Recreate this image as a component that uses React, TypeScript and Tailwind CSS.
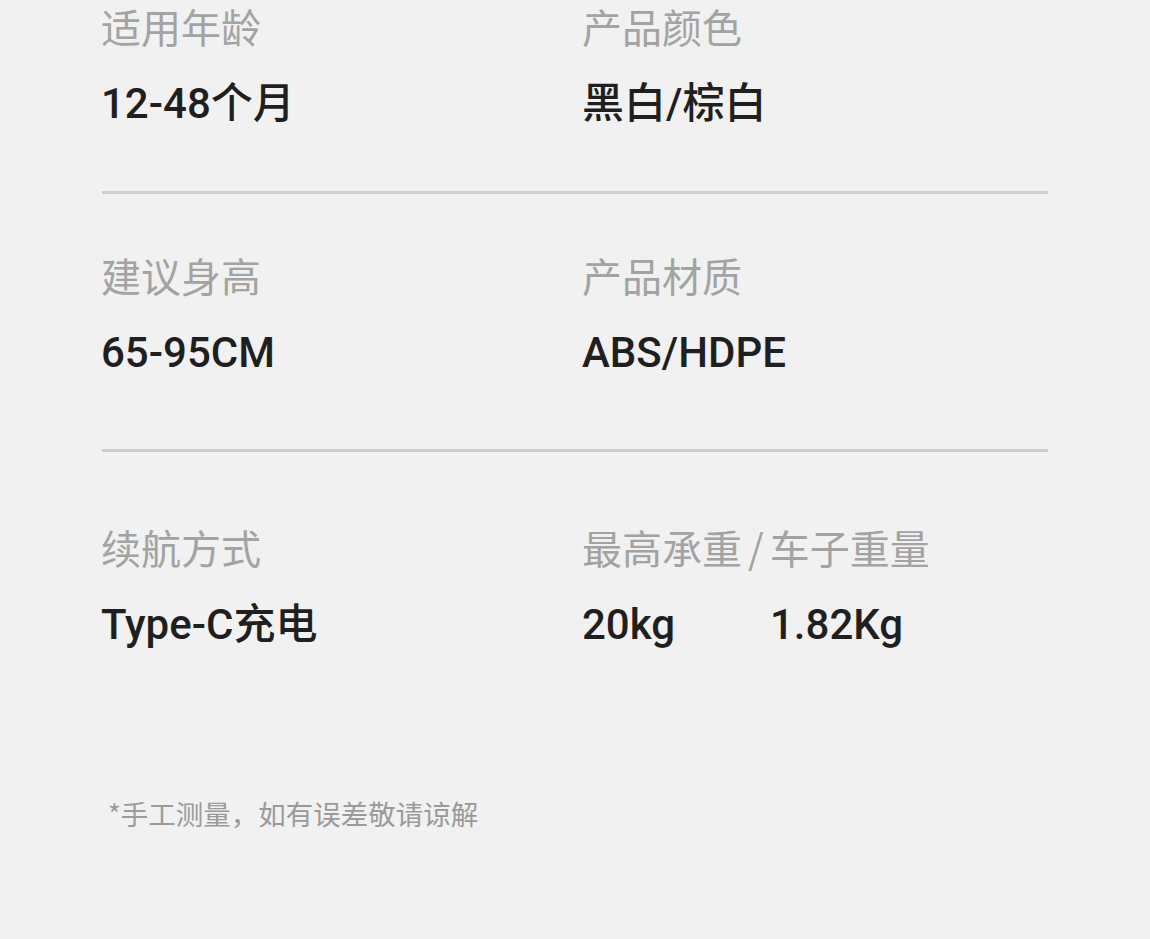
import React from "react";

const LFONT = "font-['Noto_Sans_CJK_SC',sans-serif]";
const VFONT = "font-['Roboto','Noto_Sans_CJK_SC',sans-serif]";

function Label({ children }: { children: React.ReactNode }) {
  return (
    <div className={`${LFONT} text-[40px] leading-[48px] font-normal text-[#a3a3a3] whitespace-nowrap`}>
      {children}
    </div>
  );
}

function Value({ children }: { children: React.ReactNode }) {
  return (
    <div className={`${VFONT} mt-[29px] text-[42px] leading-[50px] font-medium text-[#1f1f1f] whitespace-nowrap`}>
      {children}
    </div>
  );
}

function Divider() {
  return <div className="h-[3px] w-[946px] bg-[#cecece]" />;
}

export default function App() {
  return (
    <div className="min-h-[939px] w-full bg-[#f1f1f1] pl-[101px] pt-[2px]">
      <div className="grid grid-cols-[481px_1fr]">
        <div>
          <Label>适用年龄</Label>
          <Value>12-48个月</Value>
        </div>
        <div>
          <Label>产品颜色</Label>
          <Value>黑白/棕白</Value>
        </div>
      </div>
      <div className="mt-[62px] pl-[1px]">
        <Divider />
      </div>
      <div className="mt-[57px] grid grid-cols-[481px_1fr]">
        <div>
          <Label>建议身高</Label>
          <Value>65-95CM</Value>
        </div>
        <div>
          <Label>产品材质</Label>
          <Value>ABS/HDPE</Value>
        </div>
      </div>
      <div className="mt-[71px] pl-[1px]">
        <Divider />
      </div>
      <div className="mt-[71px] grid grid-cols-[481px_1fr]">
        <div>
          <Label>续航方式</Label>
          <Value>Type-C充电</Value>
        </div>
        <div>
          <Label>
            最高承重<span className="mx-[6px]">/</span>车子重量
          </Label>
          <div className="flex">
            <div className="w-[188px]">
              <Value>20kg</Value>
            </div>
            <Value>1.82Kg</Value>
          </div>
        </div>
      </div>
      <div className={`${LFONT} mt-[146px] pl-[7px] text-[27.5px] leading-[34px] text-[#9a9a9a]`}>
        *手工测量，如有误差敬请谅解
      </div>
    </div>
  );
}
